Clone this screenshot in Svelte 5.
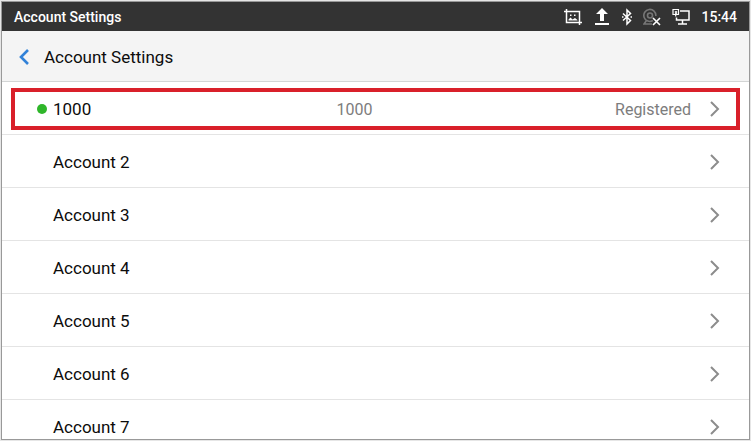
<script>
  const accounts = [
    { name: '1000', number: '1000', status: 'Registered' },
    { name: 'Account 2' },
    { name: 'Account 3' },
    { name: 'Account 4' },
    { name: 'Account 5' },
    { name: 'Account 6' },
    { name: 'Account 7' }
  ];

  let selected = $state(0);
</script>

<div class="screen">
  <div class="status-bar">
    <span class="status-title">Account Settings</span>
    <div class="status-icons">
      <svg width="20" height="18" viewBox="0 0 20 18" fill="none" stroke="#fff" stroke-width="1.5">
        <path d="M2.5 1v13.5H18M0 3.5h15.5V17" />
        <path d="M4.5 12.5v-1l2-2 2 2 2.5-1.5 2.5 2v.5z" fill="#fff" stroke="none" />
        <path d="M6 6.500h1.500V8H6zM10 6.500h1.500V8H10z" fill="#fff" stroke="none" />
      </svg>
      <svg width="14" height="18" viewBox="0 0 14 18" fill="#fff">
        <path d="M7 0l6 6H9v7H5V6H1zM0 15h14v2H0z" />
      </svg>
      <svg width="12" height="18" viewBox="-2 0 12 18" fill="none" stroke="#fff" stroke-width="1.5">
        <path d="M1 5.5l7.5 7L5 16V2l3.500 3.500-7.500 7" />
        <path d="M0 9h1.5M8.5 9H10" />
      </svg>
      <svg width="18" height="18" viewBox="0 0 18 18" fill="none" stroke="#777" stroke-width="1.6">
        <path d="M10 12.5A6 6 0 1 1 12.800 8" />
        <circle cx="7" cy="7.5" r="2.5" />
        <path d="M3.5 12.5L1 16h8" />
        <path d="M10 10l7 7M17 10l-7 7" stroke="#fff" />
      </svg>
      <svg width="18" height="18" viewBox="0 0 18 18" fill="none" stroke="#fff" stroke-width="1.5">
        <path d="M8 3h9v9H4.500V9.500M10.500 12v4M6 16h9" />
        <path d="M1 1.500h5.500v5H1zM3 3.500l2 2M5 3.500l-2 2M3.700 6.500v2" stroke-width="1.2" />
      </svg>
      <span class="clock">15:44</span>
    </div>
  </div>

  <header class="title-bar">
    <button class="back-button" aria-label="Back">
      <svg width="12" height="18" viewBox="0 0 12 18" fill="none" stroke="#3282d8" stroke-width="2.6">
        <path d="M10 2L3 9l7 7" />
      </svg>
    </button>
    <h1>Account Settings</h1>
  </header>

  <main class="account-list">
    {#each accounts as account, i}
      <button class="account-row" onclick={() => (selected = i)}>
        <span class="dot" class:online={account.status}></span>
        <span class="name">{account.name}</span>
        <span class="number">{account.number ?? ''}</span>
        <span class="status">{account.status ?? ''}</span>
        <svg width="12" height="18" viewBox="0 0 12 18" fill="none" stroke="#8c8c8c" stroke-width="2">
          <path d="M2 2l7 7-7 7" />
        </svg>
        {#if selected === i}
          <span class="highlight"></span>
        {/if}
      </button>
    {/each}
  </main>
</div>

<style>
  :global(body) {
    background: #e6e6e6;
  }

  .screen {
    display: flex;
    flex-direction: column;
    box-sizing: border-box;
    height: calc(100vh - 2px);
    margin: 1px;
    border: 1px solid #999;
    overflow: hidden;
    background: #fff;
    color: #0c0c0c;
    font-family: Roboto, sans-serif;
  }

  .status-bar {
    display: flex;
    flex: none;
    align-items: center;
    justify-content: space-between;
    height: 29px;
    padding: 0 12px;
    background: #333;
    color: #fff;
    font-size: 14px;
    font-weight: 500;
  }

  .status-icons {
    display: flex;
    align-items: center;
    gap: 11px;
  }

  .title-bar {
    display: flex;
    flex: none;
    align-items: center;
    gap: 14px;
    box-sizing: border-box;
    height: 51px;
    padding: 2px 16px 0;
    border-bottom: 1px solid #d3d5d5;
    background: #f4f4f4;
  }

  .title-bar h1 {
    margin: 0;
    font-size: 17px;
    font-weight: 400;
  }

  button {
    border: none;
    background: none;
    color: inherit;
    font-family: inherit;
    cursor: pointer;
  }

  .back-button {
    display: flex;
    padding: 0;
  }

  .account-list {
    flex: 1;
    min-height: 0;
    overflow: hidden;
  }

  .account-row {
    position: relative;
    display: flex;
    align-items: center;
    box-sizing: border-box;
    width: 100%;
    height: 53px;
    padding: 2px 28px 0 35px;
    border-bottom: 1px solid #e4e4e4;
    font-size: 17px;
    text-align: left;
  }

  .dot {
    width: 10px;
    height: 10px;
    margin-right: 6px;
    border-radius: 50%;
  }

  .dot.online {
    background: #2fb62a;
  }

  .name {
    flex: 4;
  }

  .number,
  .status {
    color: #7d7d7d;
    font-size: 16px;
  }

  .number {
    flex: 2;
  }

  .status {
    flex: 3;
    margin-right: 18px;
    text-align: right;
  }

  .highlight {
    position: absolute;
    inset: 6px 9px 4px;
    border: 4px solid #d9202a;
  }
</style>
